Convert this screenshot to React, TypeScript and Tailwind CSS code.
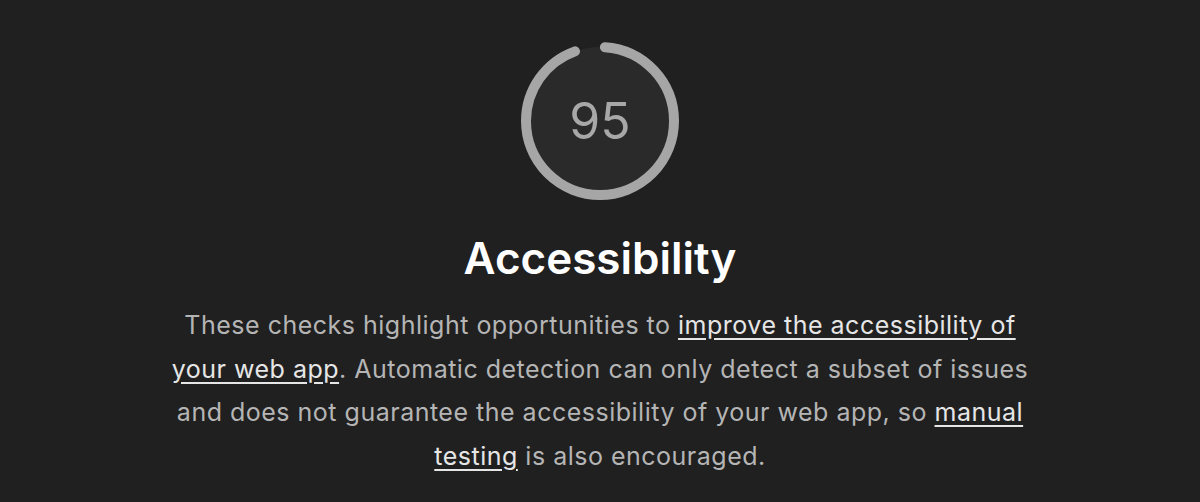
import React from 'react'

function ScoreGauge({ score }: { score: number }) {
  const r = 74
  const circ = 2 * Math.PI * r
  const arc = (score / 100) * circ
  return (
    <div className="relative w-[160px] h-[160px]">
      <svg width="160" height="160" viewBox="0 0 160 160" className="-rotate-90">
        <circle cx="80" cy="80" r={r} fill="#2a2a2a" />
        <circle
          cx="80"
          cy="80"
          r={r}
          fill="none"
          stroke="#a6a6a6"
          strokeWidth="10"
          strokeLinecap="round"
          strokeDasharray={`${arc - 8} ${circ}`}
          strokeDashoffset={-5}
        />
      </svg>
      <div className="absolute inset-0 flex items-center justify-center text-[50px] text-[#a8a8a8] font-normal">
        {score}
      </div>
    </div>
  )
}

export default function App() {
  return (
    <div
      className="min-h-screen bg-[#202020] flex flex-col items-center pt-[41px]"
      style={{ fontFamily: 'Inter, "Noto Sans", sans-serif' }}
    >
      <ScoreGauge score={95} />
      <h1 className="mt-[30px] text-[44px] font-semibold text-white leading-tight">Accessibility</h1>
      <p className="mt-[18px] w-[880px] text-center text-[25px] tracking-[0.02em] leading-[43.5px] text-[#b5b5b5]">
        These checks highlight opportunities to{' '}
        <a href="#" className="underline underline-offset-4 text-[#e6e6e6]">
          improve the accessibility of your web app
        </a>
        . Automatic detection can only detect a subset of issues and does not guarantee the accessibility
        of your web app, so{' '}
        <a href="#" className="underline underline-offset-4 text-[#e6e6e6]">
          manual testing
        </a>{' '}
        is also encouraged.
      </p>
    </div>
  )
}
